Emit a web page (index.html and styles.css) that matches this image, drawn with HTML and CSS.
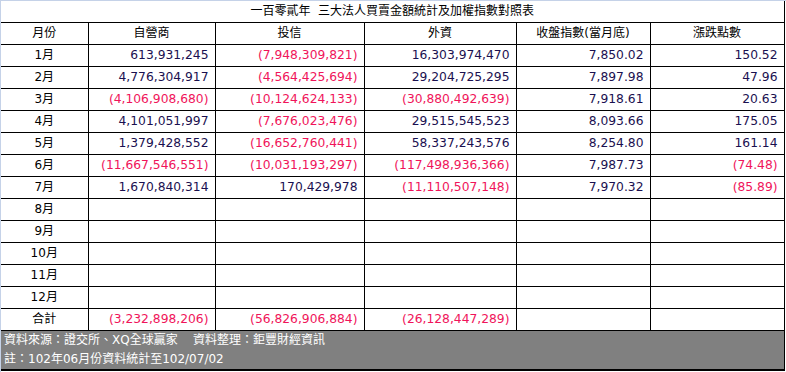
FILE: index.html
```html
<!DOCTYPE html>
<html lang="zh-TW">
<head>
  <meta charset="UTF-8">
  <title>三大法人買賣金額統計</title>
  <link rel="stylesheet" href="styles.css">
</head>
<body>
  <div class="frame">
    <table class="report">
      <colgroup>
        <col class="c-month"><col class="c-dealer"><col class="c-trust"><col class="c-foreign"><col class="c-index"><col class="c-change">
      </colgroup>
      <tr class="title-row"><td colspan="6">一百零貳年&nbsp; 三大法人買賣金額統計及加權指數對照表</td></tr>
      <tr class="head">
        <td>月份</td><td>自營商</td><td>投信</td><td>外資</td><td>收盤指數(當月底)</td><td>漲跌點數</td>
      </tr>
      <tr><td>1月</td><td class="num">613,931,245</td><td class="num neg">(7,948,309,821)</td><td class="num">16,303,974,470</td><td class="num">7,850.02</td><td class="num">150.52</td></tr>
      <tr><td>2月</td><td class="num">4,776,304,917</td><td class="num neg">(4,564,425,694)</td><td class="num">29,204,725,295</td><td class="num">7,897.98</td><td class="num">47.96</td></tr>
      <tr><td>3月</td><td class="num neg">(4,106,908,680)</td><td class="num neg">(10,124,624,133)</td><td class="num neg">(30,880,492,639)</td><td class="num">7,918.61</td><td class="num">20.63</td></tr>
      <tr><td>4月</td><td class="num">4,101,051,997</td><td class="num neg">(7,676,023,476)</td><td class="num">29,515,545,523</td><td class="num">8,093.66</td><td class="num">175.05</td></tr>
      <tr><td>5月</td><td class="num">1,379,428,552</td><td class="num neg">(16,652,760,441)</td><td class="num">58,337,243,576</td><td class="num">8,254.80</td><td class="num">161.14</td></tr>
      <tr><td>6月</td><td class="num neg">(11,667,546,551)</td><td class="num neg">(10,031,193,297)</td><td class="num neg">(117,498,936,366)</td><td class="num">7,987.73</td><td class="num neg">(74.48)</td></tr>
      <tr><td>7月</td><td class="num">1,670,840,314</td><td class="num">170,429,978</td><td class="num neg">(11,110,507,148)</td><td class="num">7,970.32</td><td class="num neg">(85.89)</td></tr>
      <tr><td>8月</td><td></td><td></td><td></td><td></td><td></td></tr>
      <tr><td>9月</td><td></td><td></td><td></td><td></td><td></td></tr>
      <tr><td>10月</td><td></td><td></td><td></td><td></td><td></td></tr>
      <tr><td>11月</td><td></td><td></td><td></td><td></td><td></td></tr>
      <tr><td>12月</td><td></td><td></td><td></td><td></td><td></td></tr>
      <tr><td>合計</td><td class="num neg">(3,232,898,206)</td><td class="num neg">(56,826,906,884)</td><td class="num neg">(26,128,447,289)</td><td></td><td></td></tr>
      <tr class="foot">
        <td colspan="6">資料來源：證交所、XQ全球贏家&nbsp;&nbsp;&nbsp; 資料整理：鉅豐財經資訊<br>註：102年06月份資料統計至102/07/02</td>
      </tr>
    </table>
  </div>
</body>
</html>
```
FILE: styles.css
```css
* { box-sizing: border-box; }
body {
  margin: 0;
  background: #fff;
  font-family: "DejaVu Sans", "Noto Sans CJK TC", sans-serif;
  font-size: 12px;
  color: #000;
}
.frame {
  width: 786px;
  height: 372px;
  border-left: 1px solid #c5d2e8;
  border-top: 1px solid #c5d2e8;
}
.report {
  border-collapse: collapse;
  table-layout: fixed;
  width: 783px;
}
.c-month { width: 87px; }
.c-dealer { width: 127px; }
.c-trust { width: 149px; }
.c-foreign { width: 152px; }
.c-index { width: 134px; }
.c-change { width: 134px; }
.report td {
  height: 22px;
  padding: 0 4px;
  border: 1px solid #000;
  text-align: center;
  font-size: 12px;
  color: #000;
  white-space: nowrap;
  line-height: 20px;
}
.report td:first-child { border-left: none; }
.report td.num {
  padding: 0 6px 0 2px;
  text-align: right;
  font-size: 12.3px;
  color: #1a1050;
}
.report td.neg { color: #f0145a; }
.report .title-row td {
  height: 21px;
  border-top: none;
}
.report .foot td {
  height: 40px;
  padding: 0 3px;
  background: #808080;
  color: #fff;
  text-align: left;
  line-height: 19px;
  border-bottom: 2px solid #000;
}
```
